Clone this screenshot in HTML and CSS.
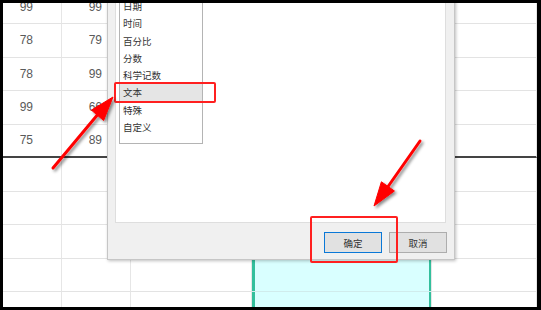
FILE: index.html
```html
<!DOCTYPE html>
<html lang="zh">
<head>
<meta charset="utf-8">
<link rel="stylesheet" href="styles.css">
</head>
<body>
<div class="frame">
  <div class="sheet">
    <div class="c num">99</div><div class="c num">99</div><div class="c"></div><div class="c"></div><div class="c"></div>
    <div class="c num">78</div><div class="c num">79</div><div class="c"></div><div class="c"></div><div class="c"></div>
    <div class="c num">78</div><div class="c num">99</div><div class="c"></div><div class="c"></div><div class="c"></div>
    <div class="c num">99</div><div class="c num">66</div><div class="c"></div><div class="c"></div><div class="c"></div>
    <div class="c num thick">75</div><div class="c num thick">89</div><div class="c thick"></div><div class="c thick"></div><div class="c thick"></div>
    <div class="c"></div><div class="c"></div><div class="c"></div><div class="c"></div><div class="c"></div>
    <div class="c"></div><div class="c"></div><div class="c"></div><div class="c"></div><div class="c"></div>
    <div class="c"></div><div class="c"></div><div class="c"></div><div class="c sel"></div><div class="c"></div>
    <div class="c"></div><div class="c"></div><div class="c"></div><div class="c sel"></div><div class="c"></div>
    <div class="c"></div><div class="c"></div><div class="c"></div><div class="c sel"></div><div class="c"></div>
  </div>

  <div class="dialog">
    <div class="panel">
      <ul class="list">
        <li>日期</li>
        <li>时间</li>
        <li>百分比</li>
        <li>分数</li>
        <li>科学记数</li>
        <li class="active">文本</li>
        <li>特殊</li>
        <li>自定义</li>
      </ul>
    </div>
    <div class="footer">
      <button class="btn primary">确定</button>
      <button class="btn">取消</button>
    </div>
  </div>

  <div class="mark mark-list"></div>
  <div class="mark mark-ok"></div>

  <svg class="arrows" width="541" height="310" viewBox="0 0 541 310">
    <defs>
      <filter id="sh" x="-50%" y="-50%" width="200%" height="200%">
        <feDropShadow dx="2" dy="2" stdDeviation="1.5" flood-color="#000" flood-opacity="0.45"/>
      </filter>
    </defs>
    <g filter="url(#sh)" fill="#ff0000" stroke="#ff0000">
      <line x1="53" y1="168" x2="99" y2="113" stroke-width="3" stroke-linecap="round"/>
      <polygon points="113,97 103.6,120.5 91.4,110.1" stroke-width="1" stroke-linejoin="round"/>
      <line x1="420" y1="141" x2="387" y2="188" stroke-width="3" stroke-linecap="round"/>
      <polygon points="374,206 381.4,181.8 394.4,191" stroke-width="1" stroke-linejoin="round"/>
    </g>
  </svg>
</div>
</body>
</html>
```

FILE: styles.css
```css
* { box-sizing: border-box; }

html, body {
  margin: 0;
  padding: 0;
  background: #000;
}

.frame {
  position: relative;
  width: 541px;
  height: 310px;
  border-style: solid;
  border-color: #000;
  border-width: 3px 4px 3px 3px;
  background: #fff;
  overflow: hidden;
}

.sheet {
  display: grid;
  grid-template-columns: 59px 69px 121px 180px 105px;
  grid-auto-rows: 33.5px;
  margin-top: -12.5px;
}

.c {
  border-bottom: 1px solid #e3e3e3;
  border-right: 1px solid #e6e6e6;
}

.num {
  font-family: "Liberation Sans", Arial, sans-serif;
  font-size: 12px;
  color: #5a5a5a;
  text-align: right;
  padding-right: 28px;
  display: flex;
  align-items: center;
  justify-content: flex-end;
}

.thick {
  border-bottom: 2px solid #444;
}

.sel {
  background: #d9ffff;
  box-shadow: inset 3px 0 0 #33bf9c, inset -2px 0 0 #33bf9c;
  border-bottom-color: #d0ecec;
}

.dialog {
  position: absolute;
  left: 104px;
  top: -30px;
  width: 348px;
  height: 287px;
  background: #f0f0f0;
  border: 1px solid #c6c6c6;
  box-shadow: 1px 1px 3px rgba(0, 0, 0, 0.25);
  display: flex;
  flex-direction: column;
}

.panel {
  flex: 1;
  margin: 0 8px 0 7px;
  background: #fff;
  border: 1px solid #dedede;
}

.list {
  list-style: none;
  margin: 20px 0 0 3px;
  padding: 2px 0 7px;
  width: 84px;
  border: 1px solid #b4b4b4;
  font-family: "Noto Sans CJK SC", sans-serif;
  font-size: 9.5px;
  color: #333;
}

.list li {
  height: 17.3px;
  line-height: 17.3px;
  padding-left: 3px;
}

.list li.active {
  background: #e5e5e5;
}

.footer {
  height: 36px;
  display: flex;
  justify-content: flex-end;
  align-items: flex-start;
  gap: 7px;
  padding: 9px 7px 0 0;
}

.btn {
  width: 58px;
  height: 21px;
  margin: 0;
  padding: 0;
  background: #e1e1e1;
  border: 1px solid #adadad;
  font-family: "Noto Sans CJK SC", sans-serif;
  font-size: 9.5px;
  color: #333;
}

.btn.primary {
  border-color: #0a78d7;
}

.mark {
  position: absolute;
  border: 2px solid #ff2020;
  border-radius: 2px;
}

.mark-list {
  left: 111px;
  top: 79px;
  width: 102px;
  height: 21px;
}

.mark-ok {
  left: 307px;
  top: 213px;
  width: 88px;
  height: 47px;
}

.arrows {
  position: absolute;
  left: -3px;
  top: -3px;
}
```
